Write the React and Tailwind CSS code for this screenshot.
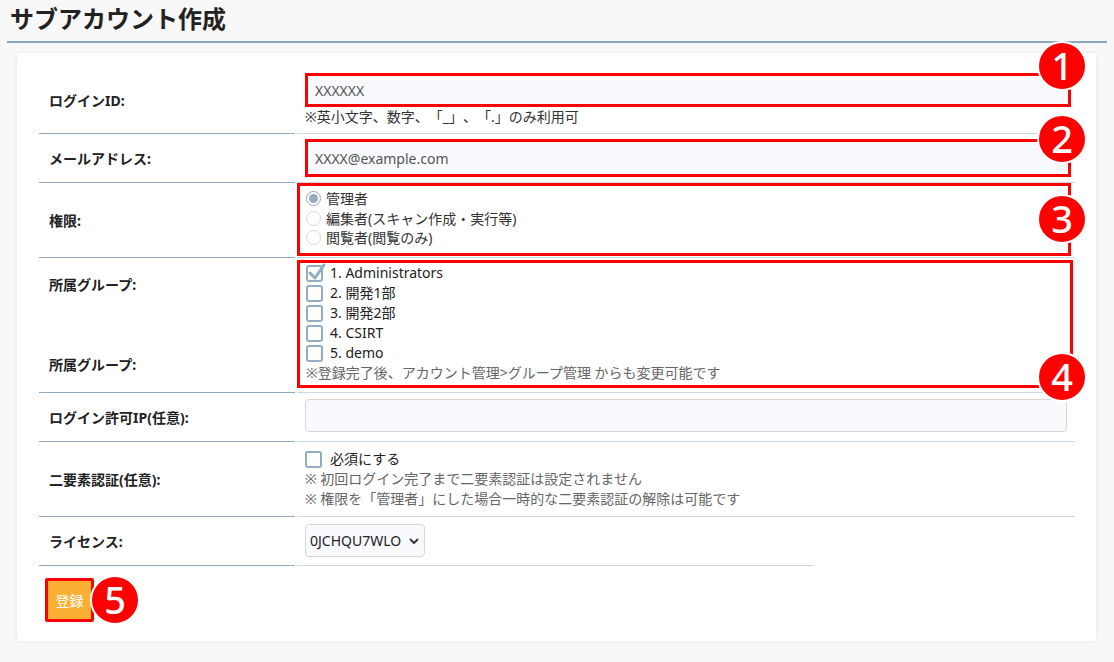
import React from "react";

const FONT = { fontFamily: '"Noto Sans", "Noto Sans CJK JP", sans-serif' };

const groups = ["1. Administrators", "2. 開発1部", "3. 開発2部", "4. CSIRT", "5. demo"];

function Badge({ n, className }) {
  return (
    <div
      className={
        "absolute w-[50px] h-[50px] rounded-full bg-[#ff0000] border-2 border-white flex items-center justify-center text-white text-[38px] font-medium leading-none " +
        className
      }
    >
      <span className="-mt-[2px]">{n}</span>
    </div>
  );
}

function Radio({ checked }) {
  return checked ? (
    <span className="w-[15px] h-[15px] rounded-full border border-[#8ea7bf] bg-white flex items-center justify-center shrink-0">
      <span className="w-[9px] h-[9px] rounded-full bg-[#93abc3]" />
    </span>
  ) : (
    <span className="w-[15px] h-[15px] rounded-full border border-[#d6d6d6] bg-white shrink-0" />
  );
}

function Check({ checked }) {
  return (
    <span className="relative w-[17px] h-[17px] rounded-[3px] border-2 border-[#93abc3] bg-white shrink-0">
      {checked && (
        <svg className="absolute -left-[1px] -top-[5px]" width="20" height="20" viewBox="0 0 20 20">
          <path d="M3 11 L8 16 L17 3" fill="none" stroke="#93abc3" strokeWidth="3" strokeLinecap="round" strokeLinejoin="round" />
        </svg>
      )}
    </span>
  );
}

function Row({ label, children, labelClass = "", valueClass = "", lineEnd = "" }) {
  return (
    <div className="flex">
      <div className={"w-[256px] border-b border-[#90a8c0] pl-[10px] font-bold text-[14px] text-[#222] flex " + labelClass}>
        {label}
      </div>
      <div className="w-[2px]" />
      <div className={"flex-1 relative " + valueClass}>
        {children}
        <div className={"absolute left-0 bottom-0 h-px bg-[#c9d8e5] " + (lineEnd || "right-0")} />
      </div>
    </div>
  );
}

export default function App() {
  return (
    <div
      className="relative w-[1114px] h-[662px] bg-[#f8f8f8] text-[#333] [text-spacing-trim:space-all] [font-feature-settings:'chws'_0]"
      style={FONT}
    >
      <div className="mx-[7px] h-[43px] border-b-2 border-[#8ea7bf] pl-[3px] pt-[3px]">
        <h1 className="text-[24px] font-bold text-[#222] leading-[32px]">サブアカウント作成</h1>
      </div>

      <div className="mx-[17px] mt-[10px] h-[588px] w-[1079px] bg-white rounded-[3px] shadow-[0_0_4px_rgba(0,0,0,0.08)] pt-[14px] pl-[22px] pr-[21px]">
        <Row label="ログインID:" labelClass="items-center" valueClass="pt-[6px] pb-[7px] pl-[8px]">
          <div className="w-[766px] h-[34px] border-[3px] border-[#ff0000] bg-[#f9fafd] flex items-center pl-[7px] text-[14px] text-[#555]">
            XXXXXX
          </div>
          <div className="text-[14px] leading-[20px] text-[#333]">※英小文字、数字、「_」、「.」のみ利用可</div>
        </Row>

        <Row label="メールアドレス:" labelClass="items-center" valueClass="pt-[5px] pb-[6px] pl-[8px]">
          <div className="w-[766px] h-[38px] border-[3px] border-[#ff0000] bg-[#f9fafd] flex items-center pl-[7px] text-[14px] text-[#555]">
            XXXX@example.com
          </div>
        </Row>

        <Row label="権限:" labelClass="items-center" valueClass="pb-[2px]">
          <div className="w-[774px] h-[73px] border-[3px] border-[#ff0000] pt-[3px] pl-[6px] text-[14px] leading-[19.5px]">
            {["管理者", "編集者(スキャン作成・実行等)", "閲覧者(閲覧のみ)"].map((t, i) => (
              <div key={t} className="flex items-center gap-[5px]">
                <Radio checked={i === 0} />
                <span>{t}</span>
              </div>
            ))}
          </div>
        </Row>

        <Row
          label={
            <>
              <span className="leading-[20px]">所属グループ:</span>
              <span className="leading-[20px]">所属グループ:</span>
            </>
          }
          labelClass="flex-col justify-between py-[17px]"
          valueClass="pt-[2px] pb-[5px]"
        >
          <div className="w-[776px] h-[128px] border-[3px] border-[#ff0000] pl-[6px] text-[14px] leading-[20px]">
            {groups.map((g, i) => (
              <div key={g} className="flex items-center gap-[7px] h-[20px]">
                <Check checked={i === 0} />
                <span className="text-[#222]">{g}</span>
              </div>
            ))}
            <div className="text-[#666]">※登録完了後、アカウント管理&gt;グループ管理 からも変更可能です</div>
          </div>
        </Row>

        <Row label="ログイン許可IP(任意):" labelClass="items-center h-[49px]" valueClass="pt-[6px] pl-[8px]">
          <div className="w-[762px] h-[33px] border border-[#d6d6d6] rounded-[4px] bg-[#f9fafd]" />
        </Row>

        <Row label="二要素認証(任意):" labelClass="items-center" valueClass="pt-[7px] pb-[8px] pl-[8px] text-[14px] leading-[20px]">
          <div className="flex items-center gap-[8px]">
            <Check />
            <span className="text-[#222]">必須にする</span>
          </div>
          <div className="text-[#666]">※ 初回ログイン完了まで二要素認証は設定されません</div>
          <div className="text-[#666]">※ 権限を「管理者」にした場合一時的な二要素認証の解除は可能です</div>
        </Row>

        <Row label="ライセンス:" labelClass="items-center h-[49px]" valueClass="pt-[7px] pl-[8px]" lineEnd="w-[517px]">
          <div className="w-[120px] h-[33px] border border-[#d6d6d6] rounded-[4px] bg-[#f9fafd] flex items-center justify-between pl-[4px] pr-[5px] text-[14px] text-[#222]">
            <span>0JCHQU7WLO</span>
            <svg width="10" height="10" viewBox="0 0 10 10">
              <path d="M1.5 3.5 L5 7 L8.5 3.5" fill="none" stroke="#333" strokeWidth="1.8" strokeLinecap="round" strokeLinejoin="round" />
            </svg>
          </div>
        </Row>

        <div className="pt-[12px] pl-[6px]">
          <button className="w-[49px] h-[44px] border-[3px] border-[#ff0000] rounded-[2px] bg-[#fbb034] text-white text-[14px] flex items-center justify-center">
            登録
          </button>
        </div>
      </div>

      <Badge n="1" className="left-[1037px] top-[41px]" />
      <Badge n="2" className="left-[1037px] top-[114px]" />
      <Badge n="3" className="left-[1037px] top-[194px]" />
      <Badge n="4" className="left-[1037px] top-[352px]" />
      <Badge n="5" className="left-[90px] top-[575px]" />
    </div>
  );
}
